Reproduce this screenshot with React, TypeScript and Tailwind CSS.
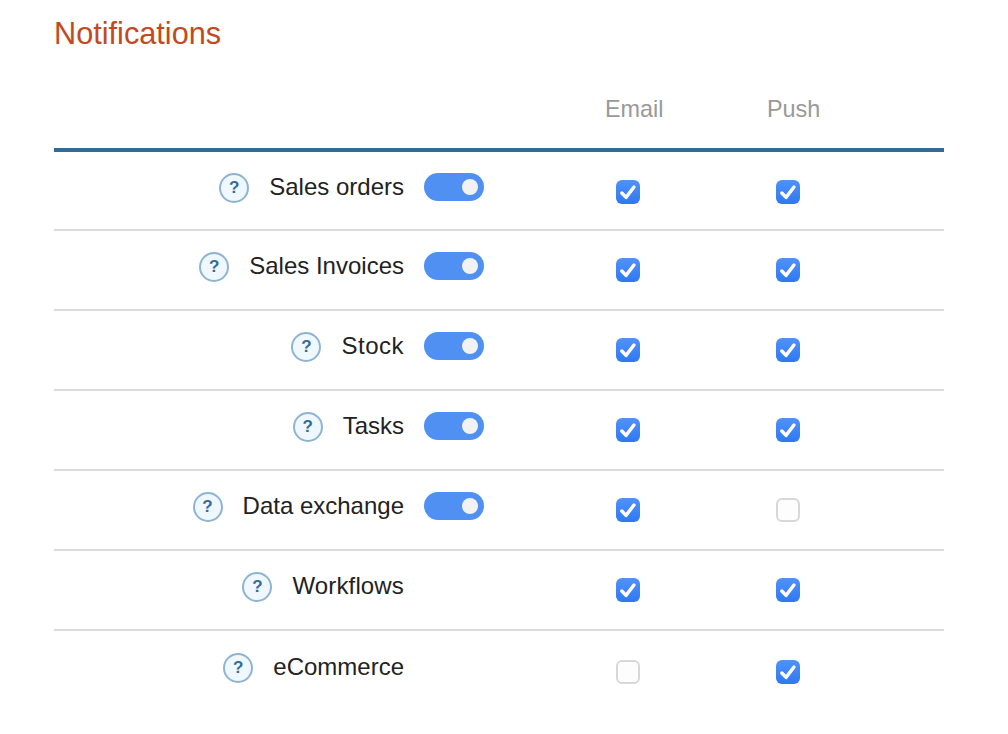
type Row = { label: string; toggle: boolean; email: boolean; push: boolean; height: string; pad: string; top: string; tracking?: string }

const ROWS: Row[] = [
  { label: 'Sales orders', toggle: true, email: true, push: true, height: 'h-[79px]', pad: 'pt-[28px]', top: 'pt-[19px]' },
  { label: 'Sales Invoices', toggle: true, email: true, push: true, height: 'h-[80px]', pad: 'pt-[27px]', top: 'pt-[19px]' },
  { label: 'Stock', toggle: true, email: true, push: true, height: 'h-[80px]', pad: 'pt-[27px]', top: 'pt-[19px]', tracking: 'tracking-[0.5px]' },
  { label: 'Tasks', toggle: true, email: true, push: true, height: 'h-[80px]', pad: 'pt-[27px]', top: 'pt-[19px]' },
  { label: 'Data exchange', toggle: true, email: true, push: false, height: 'h-[80px]', pad: 'pt-[27px]', top: 'pt-[19px]' },
  { label: 'Workflows', toggle: false, email: true, push: true, height: 'h-[80px]', pad: 'pt-[27px]', top: 'pt-[19px]', tracking: 'tracking-[0.15px]' },
  { label: 'eCommerce', toggle: false, email: false, push: true, height: 'h-[80px]', pad: 'pt-[29px]', top: 'pt-[20px]' },
]

function Checkbox({ checked }: { checked: boolean }) {
  if (!checked) {
    return <div className="w-6 h-6 rounded-[6px] border-2 border-[#d8d8d8] bg-[#fdfdfd]" />
  }
  return (
    <div className="w-6 h-6 rounded-[6px] bg-gradient-to-b from-[#4f92f8] to-[#2f78f2]">
      <svg viewBox="0 0 24 24" className="w-6 h-6" fill="none" stroke="white" strokeWidth="3.4" strokeLinecap="round" strokeLinejoin="round">
        <path d="M5.8 13 L10 17.4 L18 7" />
      </svg>
    </div>
  )
}

function Toggle() {
  return (
    <div className="w-[60px] h-7 rounded-full bg-[#5090f2] flex items-center justify-end pr-[6px]">
      <div className="w-4 h-4 rounded-full bg-[#f2f2f2]" />
    </div>
  )
}

function HelpIcon() {
  return (
    <div className="w-[30px] h-[30px] mt-[2px] rounded-full border-2 border-[#8fb4d2] bg-[#eff8fe] flex items-center justify-center text-[17px] font-bold text-[#336b96]">
      ?
    </div>
  )
}

export default function App() {
  return (
    <div className="w-[1008px] h-[734px] overflow-hidden bg-white pl-[54px] pt-[16px] font-['Liberation_Sans',Arial,sans-serif]">
      <h1 className="text-[30.7px] leading-[36px] text-[#c24a22]">Notifications</h1>
      <div className="w-[890px] mt-[38px]">
        <div className="flex h-[62px] pt-[3px] border-b-4 border-[#336b96] text-[23.4px] leading-[32px] text-[#999999]">
          <div className="w-[551px]" />
          <div className="w-[162px]">Email</div>
          <div>Push</div>
        </div>
        {ROWS.map((row) => (
          <div key={row.label} className={`flex items-start border-b-2 border-[#dcdcdc] last:border-b-0 ${row.height}`}>
            <div className={`w-[430px] flex items-center justify-end gap-5 ${row.top}`}>
              <HelpIcon />
              <span className={`text-[24px] leading-[32px] text-[#222222] ${row.tracking ?? ''}`}>{row.label}</span>
              <div className="w-[60px] flex">{row.toggle && <Toggle />}</div>
            </div>
            <div className={`ml-[132px] ${row.pad}`}>
              <Checkbox checked={row.email} />
            </div>
            <div className={`ml-[136px] ${row.pad}`}>
              <Checkbox checked={row.push} />
            </div>
          </div>
        ))}
      </div>
    </div>
  )
}
